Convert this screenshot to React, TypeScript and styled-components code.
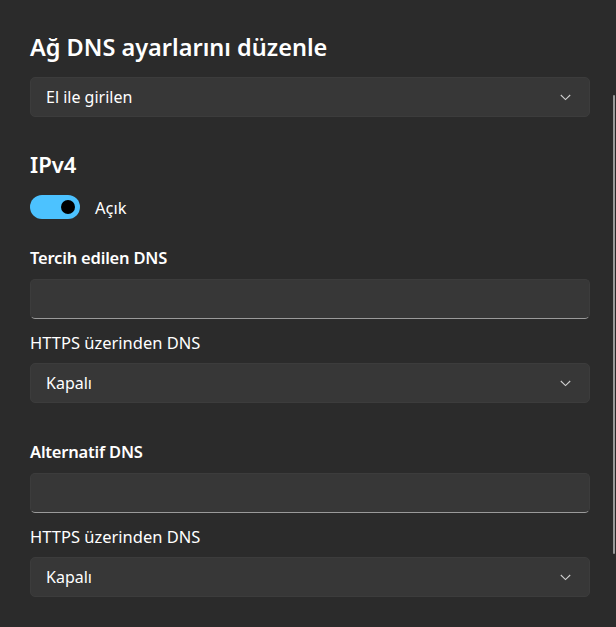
import React from "react"
import styled, { createGlobalStyle } from "styled-components"

const GlobalStyle = createGlobalStyle`
  html, body {
    margin: 0;
    padding: 0;
    background: #2b2b2b;
  }
  body {
    font-family: "Noto Sans", "Open Sans", sans-serif;
    color: #ffffff;
  }
`

const Page = styled.div`
  position: relative;
  width: 616px;
  height: 627px;
  overflow: hidden;
  background: #2b2b2b;
`

const Content = styled.div`
  display: flex;
  flex-direction: column;
  padding: 32px 26px 0 30px;
`

const Title = styled.h1`
  margin: 0;
  font-size: 23.5px;
  line-height: 30px;
  font-weight: 600;
`

const SectionTitle = styled.h2`
  margin: 33px 0 0;
  font-size: 22px;
  line-height: 28px;
  font-weight: 600;
`

const Select = styled.div<{ top: number }>`
  margin-top: ${p => p.top}px;
  height: 40px;
  box-sizing: border-box;
  display: flex;
  align-items: center;
  justify-content: space-between;
  padding: 0 18px 0 15px;
  background: #373737;
  border: 1px solid #3c3c3c;
  border-radius: 5px;
  font-size: 16px;
  color: #ffffff;
`

const Input = styled.div`
  margin-top: 11px;
  height: 40px;
  box-sizing: border-box;
  background: #373737;
  border: 1px solid #3c3c3c;
  border-bottom: 1px solid #9a9a9a;
  border-radius: 5px;
`

const Label = styled.div<{ top: number; bold?: boolean }>`
  margin-top: ${p => p.top}px;
  font-size: 16.5px;
  line-height: 20px;
  font-weight: ${p => (p.bold ? 600 : 400)};
  letter-spacing: ${p => (p.bold ? "-0.2px" : "0")};
`

const ToggleRow = styled.div`
  margin-top: 17px;
  display: flex;
  align-items: center;
  gap: 15px;
  font-size: 16.5px;
`

const Track = styled.div`
  width: 50px;
  height: 24px;
  box-sizing: border-box;
  border-radius: 12px;
  background: #4cc2ff;
  display: flex;
  align-items: center;
  justify-content: flex-end;
  padding-right: 5px;
`

const Knob = styled.div`
  width: 14px;
  height: 14px;
  border-radius: 50%;
  background: #000000;
`

const Scrollbar = styled.div`
  position: absolute;
  right: 1px;
  top: 95px;
  width: 2px;
  height: 459px;
  border-radius: 1px;
  background: #9a9a9a;
`

function Chevron() {
  return (
    <svg width="11" height="7" viewBox="0 0 11 7" fill="none">
      <path d="M0.8 1 L5.5 5.6 L10.2 1" stroke="#d0d0d0" strokeWidth="1.1" />
    </svg>
  )
}

function Dropdown({ value, top }: { value: string; top: number }) {
  return (
    <Select top={top}>
      <span>{value}</span>
      <Chevron />
    </Select>
  )
}

function DnsBlock({ title, top }: { title: string; top: number }) {
  return (
    <>
      <Label top={top} bold>{title}</Label>
      <Input />
      <Label top={14}>HTTPS üzerinden DNS</Label>
      <Dropdown value="Kapalı" top={10} />
    </>
  )
}

export default function App() {
  return (
    <Page>
      <GlobalStyle />
      <Content>
        <Title>Ağ DNS ayarlarını düzenle</Title>
        <Dropdown value="El ile girilen" top={15} />
        <SectionTitle>IPv4</SectionTitle>
        <ToggleRow>
          <Track><Knob /></Track>
          <span>Açık</span>
        </ToggleRow>
        <DnsBlock title="Tercih edilen DNS" top={29} />
        <DnsBlock title="Alternatif DNS" top={39} />
      </Content>
      <Scrollbar />
    </Page>
  )
}
